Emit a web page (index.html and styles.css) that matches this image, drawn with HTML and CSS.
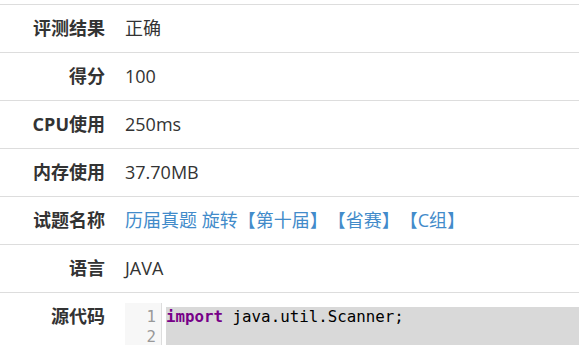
FILE: index.html
```html
<!DOCTYPE html>
<html lang="zh-CN">
<head>
<meta charset="utf-8">
<link rel="stylesheet" href="styles.css">
</head>
<body>
<div class="detail">
  <div class="row"><div class="label">评测结果</div><div class="value">正确</div></div>
  <div class="row"><div class="label">得分</div><div class="value">100</div></div>
  <div class="row"><div class="label">CPU使用</div><div class="value">250ms</div></div>
  <div class="row"><div class="label">内存使用</div><div class="value">37.70MB</div></div>
  <div class="row"><div class="label">试题名称</div><div class="value"><a class="link" href="#">历届真题 旋转【第十届】【省赛】【C组】</a></div></div>
  <div class="row"><div class="label">语言</div><div class="value">JAVA</div></div>
  <div class="row"><div class="label">源代码</div>
    <div class="value">
      <div class="code">
        <div class="gutter"><div class="ln">1</div><div class="ln">2</div></div>
        <div class="lines">
          <div class="cl sel"><span class="kw">import</span> java.util.Scanner;</div>
          <div class="cl sel">&nbsp;</div>
        </div>
      </div>
    </div>
  </div>
</div>
</body>
</html>
```
FILE: styles.css
```css
html, body {
  margin: 0;
  padding: 0;
  background: #fff;
  overflow: hidden;
}
body {
  font-family: "Open Sans", "Noto Sans CJK SC", sans-serif;
  font-size: 18px;
  color: #333;
  text-spacing-trim: space-all;
}
.detail {
  padding-top: 4px;
}
.row {
  display: flex;
  border-top: 1px solid #ddd;
}
.label {
  width: 115px;
  flex: none;
  box-sizing: border-box;
  padding: 10px 10px 10px 0;
  text-align: right;
  font-weight: bold;
  line-height: 27px;
  color: #333;
}
.value {
  flex: 1;
  padding: 10px 0 10px 10px;
  line-height: 27px;
  min-width: 0;
}
.link {
  color: #428bca;
  text-decoration: none;
}
.code {
  display: flex;
  font-family: "DejaVu Sans Mono", monospace;
  font-size: 15.8px;
  line-height: 20px;
}
.gutter {
  width: 36px;
  background: #f7f7f7;
  border-right: 1px solid #ddd;
  padding-top: 4px;
  color: #999;
  text-align: right;
  box-sizing: content-box;
}
.ln {
  padding-right: 5px;
}
.lines {
  flex: 1;
  padding: 4px 0 0 4px;
}
.cl {
  background: #d9d9d9;
  white-space: pre;
  color: #000;
}
.kw {
  color: #708;
  font-weight: bold;
}
```
